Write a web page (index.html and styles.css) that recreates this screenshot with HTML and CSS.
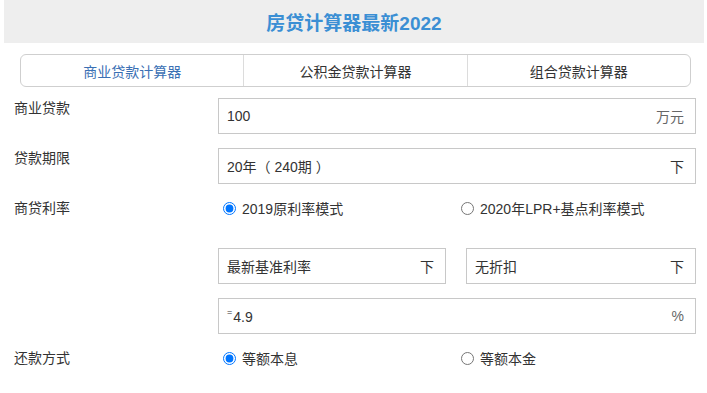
FILE: index.html
```html
<!DOCTYPE html>
<html lang="zh-CN">
<head>
    <meta charset="UTF-8">
    <meta name="viewport" content="width=device-width, initial-scale=1.0">
    <title>房贷计算器最新2022</title>
    <link rel="stylesheet" href="styles.css">
</head>
<body>
    <div class="page">
        <div class="header">
            <h1 class="title">房贷计算器最新2022</h1>
        </div>
        <div class="tabs">
            <div class="tab active">商业贷款计算器</div>
            <div class="tab">公积金贷款计算器</div>
            <div class="tab">组合贷款计算器</div>
        </div>
        <div class="form">
            <div class="label">商业贷款</div>
            <div class="field">
                <span class="value">100</span>
                <span class="unit">万元</span>
            </div>

            <div class="label">贷款期限</div>
            <div class="field">
                <span class="value">20年（ 240期 ）</span>
                <span class="arrow">下</span>
            </div>

            <div class="label">商贷利率</div>
            <div class="radios">
                <label class="radio"><input type="radio" name="mode" checked> 2019原利率模式</label>
                <label class="radio"><input type="radio" name="mode"> 2020年LPR+基点利率模式</label>
            </div>

            <div class="label"></div>
            <div class="pair">
                <div class="field">
                    <span class="value">最新基准利率</span>
                    <span class="arrow">下</span>
                </div>
                <div class="field">
                    <span class="value">无折扣</span>
                    <span class="arrow">下</span>
                </div>
            </div>

            <div class="label"></div>
            <div class="field">
                <span class="value"><sup class="eq">=</sup>4.9</span>
                <span class="unit">%</span>
            </div>

            <div class="label">还款方式</div>
            <div class="radios">
                <label class="radio"><input type="radio" name="pay" checked> 等额本息</label>
                <label class="radio"><input type="radio" name="pay"> 等额本金</label>
            </div>
        </div>
    </div>
</body>
</html>
```

FILE: styles.css
```css
body {
    margin: 0;
    background: #fff;
    color: #333;
    font-family: "Liberation Sans", "Noto Sans CJK SC", sans-serif;
    font-size: 14px;
}
.page {
    padding: 0 3px 0 4px;
}
.header {
    background-color: #eeeeee;
    height: 43px;
    display: flex;
    align-items: center;
    justify-content: center;
}
.title {
    margin: 0;
    font-size: 19px;
    font-weight: bold;
    color: #3b8fd4;
}
.tabs {
    display: flex;
    margin: 11px 13px 11px 16px;
    height: 33px;
    border: 1px solid #cfcfcf;
    border-radius: 6px;
    box-sizing: border-box;
}
.tab {
    flex: 1;
    display: flex;
    align-items: center;
    justify-content: center;
    border-left: 1px solid #dcdcdc;
    color: #333;
}
.tab:first-child {
    border-left: none;
}
.tab.active {
    color: #3a70b4;
}
.form {
    display: grid;
    grid-template-columns: 204px 478px;
    grid-auto-rows: 36px;
    row-gap: 14px;
    padding-left: 10px;
}
.label {
    line-height: 20px;
    color: #333;
}
.field {
    display: flex;
    align-items: center;
    justify-content: space-between;
    border: 1px solid #c8c8c8;
    box-sizing: border-box;
    height: 36px;
    padding: 0 11px 0 8px;
}
.value {
    color: #333;
}
.unit {
    color: #666;
}
.arrow {
    color: #333;
}
.eq {
    font-size: 9px;
    vertical-align: 7px;
    margin-right: 1px;
}
.pair {
    display: grid;
    grid-template-columns: 228px 230px;
    column-gap: 20px;
}
.radios {
    display: grid;
    grid-template-columns: 238px 240px;
}
.radio {
    display: flex;
    align-items: center;
    height: 20px;
    gap: 3px;
}
.radio input {
    margin: 0 3px 0 5px;
    width: 13px;
    height: 13px;
}
```
